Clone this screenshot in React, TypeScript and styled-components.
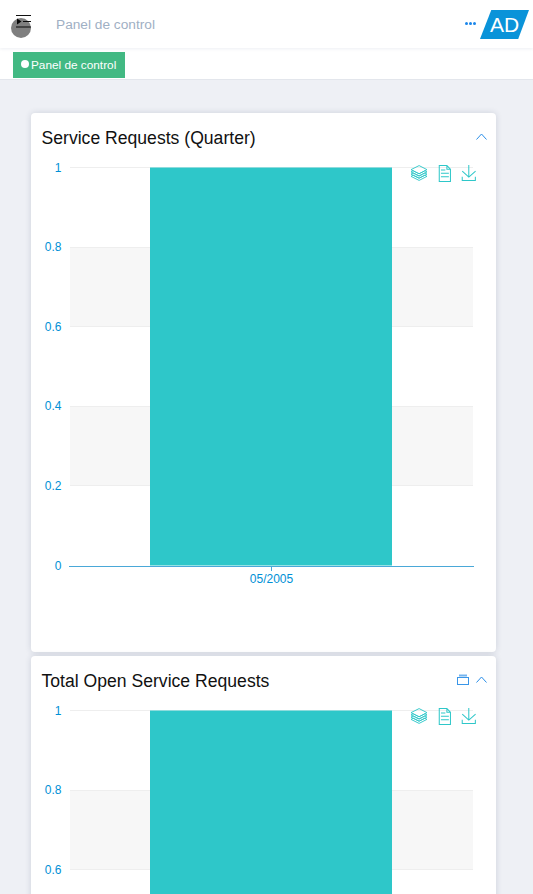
import React from 'react'
import styled, { createGlobalStyle } from 'styled-components'

const Global = createGlobalStyle`
  html, body {
    margin: 0;
    padding: 0;
    height: 100%;
    overflow: hidden;
    background: #eef0f5;
    font-family: "Liberation Sans", Arial, sans-serif;
  }
`

const Page = styled.div`
  height: 894px;
  overflow: hidden;
  position: relative;
`

const Header = styled.header`
  height: 48px;
  background: #fff;
  display: flex;
  align-items: center;
  padding: 0 4px 0 16px;
  box-shadow: 0 1px 3px rgba(30, 50, 100, 0.08);
  position: relative;
`

const MenuButton = styled.button`
  width: 16px;
  height: 16px;
  padding: 0;
  border: 0;
  background: none;
  display: flex;
  margin-top: -4px;
`

const Blob = styled.span`
  position: absolute;
  left: 11px;
  top: 18px;
  width: 20px;
  height: 20px;
  border-radius: 50%;
  background: rgba(0, 0, 0, 0.5);
`

const HeaderTitle = styled.div`
  margin-left: 24px;
  flex: 1;
  font-size: 13.7px;
  color: #9fb0c4;
`

const More = styled.div`
  display: flex;
  gap: 1px;
  margin-right: 4px;
  margin-top: -1px;
`

const Dot = styled.span`
  width: 3px;
  height: 3px;
  border-radius: 50%;
  background: #1a86ea;
`

const Logo = styled.div`
  width: 49px;
  height: 29px;
  background: #0a93d9;
  clip-path: polygon(23% 0, 100% 0, 78% 100%, 0 100%);
  color: #fff;
  font-size: 21px;
  line-height: 29px;
  text-align: center;
  margin-top: 1px;
`

const TabBar = styled.nav`
  height: 32px;
  box-sizing: border-box;
  background: #fff;
  border-bottom: 1px solid #e3e6ec;
  padding: 4px 13px 0;
`

const Tab = styled.div`
  width: 112px;
  height: 26px;
  box-sizing: border-box;
  background: #42b983;
  color: #fff;
  font-size: 11.8px;
  display: flex;
  align-items: center;
  padding-left: 8px;
  gap: 2px;
`

const TabDot = styled.span`
  width: 8px;
  height: 8px;
  border-radius: 50%;
  background: #fff;
  margin-top: -3px;
`

const Content = styled.main`
  padding: 33px 37px 0 31px;
  display: flex;
  flex-direction: column;
  gap: 4px;
`

const Card = styled.section`
  height: 539px;
  flex-shrink: 0;
  background: #fff;
  border-radius: 4px;
  box-shadow: 0 0 6px rgba(40, 50, 90, 0.16);
  position: relative;
`

const CardHead = styled.div`
  height: 46px;
  display: flex;
  align-items: center;
  padding: 5px 9px 0 10.5px;
  box-sizing: border-box;
`

const CardTitle = styled.h2`
  flex: 1;
  margin: 0;
  font-size: 17.6px;
  font-weight: 400;
  color: #111;
`

const HeadTools = styled.div`
  display: flex;
  align-items: center;
  gap: 7px;
  margin-top: -5px;
`

const ChartTools = styled.div`
  position: absolute;
  top: 51.5px;
  left: 380px;
  display: flex;
  gap: 8.5px;
`

const ChartSvg = styled.svg`
  display: block;
`

const AxisText = styled.text`
  font-size: 12px;
  fill: #0090d6;
`

const TEAL = '#2ec7c9'
const TICKS = [1, 0.8, 0.6, 0.4, 0.2, 0]
const TOP = 8.5
const STEP = 79.6

const Chart = () => (
  <ChartSvg width="464" height="493">
    {[1, 3].map(i => (
      <rect key={i} x="39" y={TOP + STEP * i} width="403" height={STEP} fill="#f7f7f7" />
    ))}
    {TICKS.slice(0, 5).map((t, i) => (
      <line key={t} x1="39" x2="442" y1={Math.floor(TOP + STEP * i) + 0.5} y2={Math.floor(TOP + STEP * i) + 0.5} stroke="#eeeeee" />
    ))}
    <rect x="119" y={TOP} width="242" height={STEP * 5} fill={TEAL} />
    <line x1="38" x2="443" y1="407.5" y2="407.5" stroke="#4aa8d8" />
    <line x1="240.5" x2="240.5" y1="407" y2="412" stroke="#4aa8d8" />
    {TICKS.map((t, i) => (
      <AxisText key={t} x="30.5" y={TOP + STEP * i + 4} textAnchor="end">{t}</AxisText>
    ))}
    <AxisText x="240.5" y="424" textAnchor="middle">05/2005</AxisText>
  </ChartSvg>
)

const StackIcon = () => (
  <svg width="16" height="16" viewBox="0 0 60 60" fill="none" stroke={TEAL} strokeWidth="3.5">
    <path d="M8.2,38.4l-8.4,4.1l30.6,15.3L60,42.5l-8.1-4.1l-21.5,11L8.2,38.4z M51.9,30l-8.1,4.2l-13.4,6.9l-13.9-6.9L8.2,30l-8.4,4.2l8.4,4.2l22.2,11l21.5-11l8.1-4.2L51.9,30z M51.9,21.7l-8.1,4.2L35.7,30l-5.3,2.8L24.9,30l-8.4-4.1l-8.3-4.2l-8.4,4.2L8.2,30l8.3,4.2l13.9,6.9l13.4-6.9l8.1-4.2l8.1-4.1L51.9,21.7z M30.4,2.2L-0.2,17.5l8.4,4.1l8.3,4.2l8.4,4.2l5.5,2.7l5.3-2.7l8.1-4.2l8.1-4.2l8.1-4.1L30.4,2.2z" />
  </svg>
)

const DocIcon = () => (
  <svg width="17" height="17" viewBox="0 0 60 60" fill="none" stroke={TEAL} strokeWidth="3.6">
    <path d="M17.5,17.3H33 M45.4,29.5h-28 M11.5,2v56H51V14.8L38.4,2H11.5z M38.4,2.2v12.7H51 M45.4,41.7h-28" />
  </svg>
)

const SaveIcon = () => (
  <svg width="16" height="16" viewBox="0 0 60 60" fill="none" stroke={TEAL} strokeWidth="3.8">
    <path d="M4.7,22.9L29.3,45.5L54.7,23.4M4.6,43.6L4.6,58L53.8,58L53.8,43.6M29.2,45.1L29.2,0" />
  </svg>
)

const Chevron = () => (
  <svg width="11" height="7" viewBox="0 0 11 7" fill="none" stroke="#2a8ee8">
    <path d="M0.5 6.5L5.5 1l5 5.5" />
  </svg>
)

const BoxIcon = () => (
  <svg width="12" height="11" viewBox="0 0 12 11" fill="none" stroke="#3a96e8">
    <rect x="0.5" y="3.5" width="11" height="7" />
    <path d="M2 1.5h8" strokeWidth="2" opacity="0.7" />
  </svg>
)

const MenuIcon = () => (
  <svg width="16" height="16" viewBox="0 0 16 16" fill="none" stroke="#111" strokeWidth="1.2">
    <path d="M0 1.5h15 M7 7.5h8 M0 13h15" />
    <path d="M1 4.5l4.5 3-4.5 3z" fill="#111" stroke="none" />
  </svg>
)

const ChartCard = ({ title, extra }: { title: string; extra?: boolean }) => (
  <Card>
    <CardHead>
      <CardTitle>{title}</CardTitle>
      <HeadTools>
        {extra && <BoxIcon />}
        <Chevron />
      </HeadTools>
    </CardHead>
    <Chart />
    <ChartTools>
      <StackIcon />
      <DocIcon />
      <SaveIcon />
    </ChartTools>
  </Card>
)

const App = (): JSX.Element => (
  <Page>
    <Global />
    <Header>
      <MenuButton><MenuIcon /></MenuButton>
      <Blob />
      <HeaderTitle>Panel de control</HeaderTitle>
      <More><Dot /><Dot /><Dot /></More>
      <Logo>AD</Logo>
    </Header>
    <TabBar>
      <Tab><TabDot />Panel de control</Tab>
    </TabBar>
    <Content>
      <ChartCard title="Service Requests (Quarter)" />
      <ChartCard title="Total Open Service Requests" extra />
    </Content>
  </Page>
)

export default App
